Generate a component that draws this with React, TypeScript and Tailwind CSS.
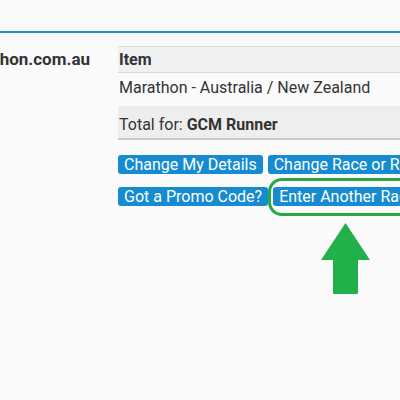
import React from "react";

const Btn = ({ children, className = "" }: { children: React.ReactNode; className?: string }) => (
  <div className={`shrink-0 h-[19px] flex items-center px-[6px] rounded-[3px] bg-[#168bcf] text-white text-[16px] leading-none whitespace-nowrap ${className}`}>
    {children}
  </div>
);

export default function App() {
  return (
    <div className="relative w-[400px] h-[400px] bg-[#fafafa] overflow-hidden font-['Roboto',sans-serif] text-[#333]">
      <div className="h-[31px]" />
      <div className="h-[2px] bg-[#2b8fc5]" />
      <div className="flex pt-[13px]">
        <div className="w-[90px] shrink-0 flex justify-end overflow-hidden whitespace-nowrap font-bold text-[17px] pt-[1px]">
          runner@goldcoastmarathon.com.au
        </div>
        <div className="ml-[28px] w-[420px] shrink-0">
          <div className="border-t border-[#d8d8d8] bg-[#f1f1f1] h-[27px] flex items-center px-[1px] font-bold text-[16px] border-b border-[#cfcfcf]">
            Item
          </div>
          <div className="h-[33px] flex items-center px-[1px] text-[16px] pb-[3px]">
            Marathon - Australia / New Zealand
          </div>
          <div className="h-[34px] bg-[#eeeeee] flex items-center px-[1px] text-[16px] pt-[6px] border-b-2 border-[#cccccc]">
            Total for:&nbsp;<span className="font-bold">GCM Runner</span>
          </div>
          <div className="mt-[15px] flex gap-[5px]">
            <Btn>Change My Details</Btn>
            <Btn>Change Race or Reg</Btn>
          </div>
          <div className="mt-[13px] flex gap-[5px]">
            <Btn>Got a Promo Code?</Btn>
            <Btn>Enter Another Race</Btn>
          </div>
        </div>
      </div>
      <div className="absolute left-[268px] top-[178px] w-[160px] h-[38px] border-[3px] border-[#27a844] rounded-[14px]" />
      <svg className="absolute left-[321px] top-[223px]" width="50" height="72" viewBox="0 0 50 72">
        <path d="M24.5 0 L49 37 L37 37 L37 70 Q37 71 36 71 L13 71 Q12 71 12 70 L12 37 L0 37 Z" fill="#22b04b" />
      </svg>
    </div>
  );
}
